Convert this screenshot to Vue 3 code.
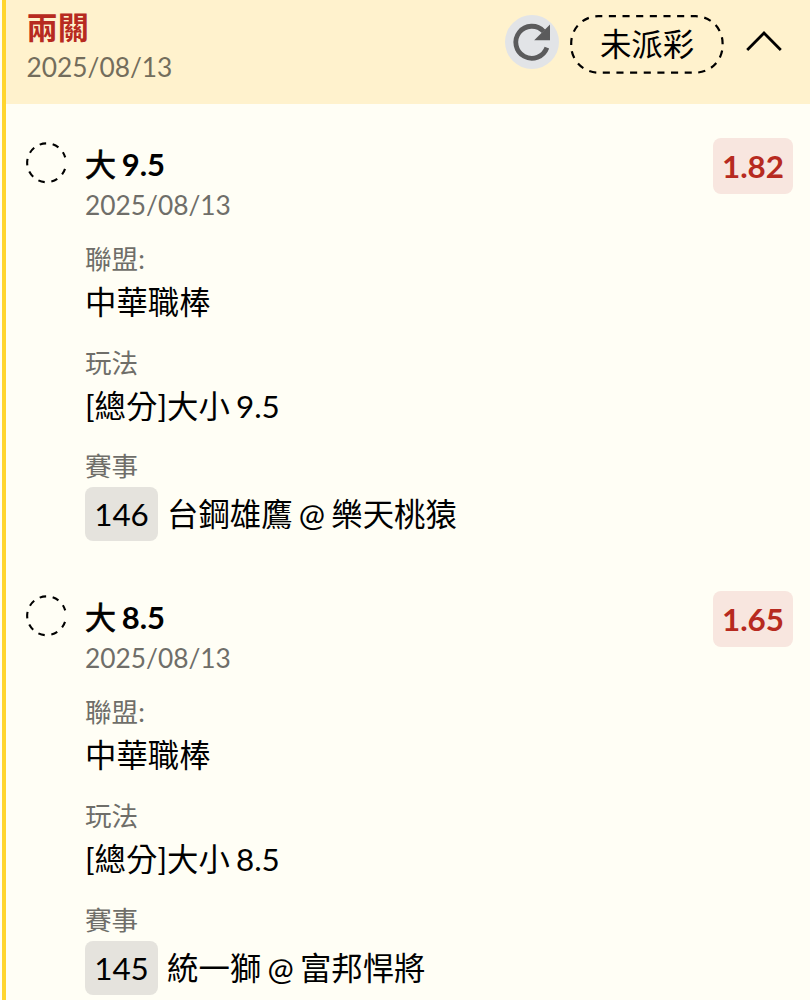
<template>
  <div class="ticket">
    <header class="ticket-header">
      <div class="ticket-info">
        <div class="ticket-type">兩關</div>
        <div class="ticket-date">2025/08/13</div>
      </div>
      <button class="refresh-btn" aria-label="refresh">
        <svg viewBox="0 0 54 54">
          <path class="refresh-arc" d="M41.9 32.6 A16 16 0 1 1 38.6 16.4" />
          <path class="refresh-head" d="M45 9.5 V25.3 H29.2 Z" />
        </svg>
      </button>
      <div class="status">
        <svg class="status-outline" viewBox="0 0 154 59">
          <rect x="1.2" y="1.2" width="151.4" height="56.4" rx="27" pathLength="27" />
        </svg>
        <span>未派彩</span>
      </div>
      <button class="toggle-btn" aria-label="collapse">
        <svg viewBox="0 0 36 22">
          <path d="M1.2 20 L18 3 L34.8 20" />
        </svg>
      </button>
    </header>

    <section v-for="bet in bets" :key="bet.no" class="bet">
      <svg class="bet-state" viewBox="0 0 42 42">
        <path d="M39 26.8 A19.4 19.4 0 1 1 39.2 15.4" />
      </svg>
      <div class="bet-body">
        <div class="bet-title">
          <span class="pick">{{ bet.pick }}</span> {{ bet.line }}
        </div>
        <div class="bet-date">{{ bet.date }}</div>
        <div class="field">
          <div class="label">聯盟:</div>
          <div class="value">{{ bet.league }}</div>
        </div>
        <div class="field">
          <div class="label">玩法</div>
          <div class="value">[總分]大小 {{ bet.line }}</div>
        </div>
        <div class="field">
          <div class="label">賽事</div>
          <div class="match">
            <span class="match-no">{{ bet.no }}</span>
            <span>{{ bet.match }}</span>
          </div>
        </div>
      </div>
      <div class="odds">{{ bet.odds }}</div>
    </section>
  </div>
</template>

<script setup>
const bets = [
  {
    pick: '大',
    line: '9.5',
    date: '2025/08/13',
    league: '中華職棒',
    no: '146',
    match: '台鋼雄鷹 @ 樂天桃猿',
    odds: '1.82',
  },
  {
    pick: '大',
    line: '8.5',
    date: '2025/08/13',
    league: '中華職棒',
    no: '145',
    match: '統一獅 @ 富邦悍將',
    odds: '1.65',
  },
];
</script>

<style>
body {
  background-color: #fffef5;
  overflow: hidden;
}
</style>

<style scoped>
.ticket {
  height: 1000px;
  margin-left: 2px;
  border-left: 4px solid #ffd52f;
  box-sizing: border-box;
  overflow: hidden;
  background-color: #fffef5;
  color: #000;
  font-family: Lato, 'Noto Sans CJK TC', sans-serif;
  font-size: 31.4px;
  white-space: nowrap;
  word-spacing: -1.8px;
}

.ticket-header {
  display: flex;
  align-items: flex-start;
  height: 104px;
  box-sizing: border-box;
  padding: 7px 28px 0 20.5px;
  background-color: #fff2cd;
}

.ticket-info {
  flex: 1;
}

.ticket-type {
  line-height: 40px;
  font-size: 31.2px;
  font-weight: 700;
  color: #b72a20;
}

.ticket-date {
  line-height: 40px;
  font-size: 26.3px;
  color: #736d5c;
}

button {
  padding: 0;
  border: none;
  background: none;
}

svg {
  display: block;
  fill: none;
}

.refresh-btn {
  width: 54px;
  height: 54px;
  margin: 8px 11px 0 0;
  border-radius: 50%;
  background-color: #e2e4e7;
}

.refresh-arc {
  stroke: #5b5b5c;
  stroke-width: 4.8;
}

.refresh-head {
  fill: #5b5b5c;
}

.status {
  position: relative;
  width: 154px;
  height: 59px;
  margin-top: 8px;
  line-height: 59px;
  text-align: center;
}

.status-outline {
  position: absolute;
  inset: 0;
}

.status-outline rect {
  stroke: #000;
  stroke-width: 2.2;
  stroke-dasharray: 0.52 0.48;
  stroke-dashoffset: 0.22;
}

.toggle-btn {
  width: 36px;
  height: 22px;
  margin: 23px 0 0 22px;
}

.toggle-btn path {
  stroke: #000;
  stroke-width: 2.8;
}

.bet {
  display: flex;
  align-items: flex-start;
  height: 453.4px;
  box-sizing: border-box;
  padding: 34px 17px 0 19.5px;
}

.bet-state {
  width: 42px;
  height: 42px;
  margin-top: 3.5px;
}

.bet-state path {
  stroke: #000;
  stroke-width: 2.1;
  stroke-dasharray: 6.4 6.6;
}

.bet-body {
  flex: 1;
  margin-left: 17.5px;
  padding-top: 6px;
}

.bet-title {
  line-height: 40px;
  font-weight: 700;
  font-size: 31px;
}

.pick {
  font-weight: 400;
  -webkit-text-stroke: 0.7px #000;
}

.bet-date {
  line-height: 42px;
  font-size: 26.3px;
  color: #6f6e69;
}

.field {
  height: 103.6px;
  padding-top: 13px;
  box-sizing: border-box;
}

.label {
  line-height: 40px;
  font-size: 26.6px;
  color: #6f6e69;
}

.value {
  line-height: 46px;
}

.match {
  display: flex;
  align-items: center;
  gap: 9px;
  margin-top: 1px;
  line-height: 54px;
}

.match-no {
  width: 73px;
  border-radius: 8px;
  background-color: #e5e3dd;
  text-align: center;
}

.odds {
  width: 80px;
  border-radius: 8px;
  background-color: #f8e6df;
  color: #b72a20;
  font-weight: 700;
  line-height: 56px;
  text-align: center;
}
</style>
